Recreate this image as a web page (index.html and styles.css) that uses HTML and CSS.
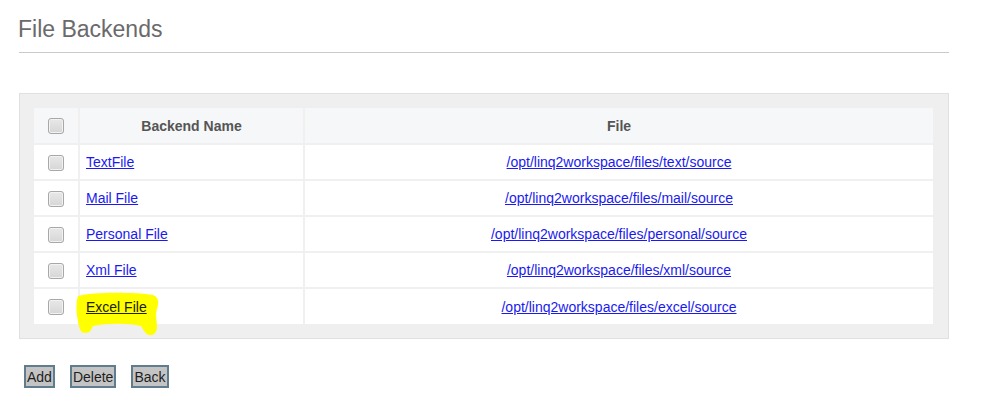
FILE: index.html
```html
<!DOCTYPE html>
<html>
<head>
<meta charset="utf-8">
<link rel="stylesheet" href="styles.css">
</head>
<body>
<div class="page">
  <h1 class="title">File Backends</h1>
  <div class="rule"></div>
  <div class="panel">
    <table class="grid">
      <thead>
        <tr>
          <th class="c-check"><span class="cb"></span></th>
          <th class="c-name">Backend Name</th>
          <th class="c-file">File</th>
        </tr>
      </thead>
      <tbody>
        <tr>
          <td class="c-check"><span class="cb"></span></td>
          <td class="c-name"><a href="#">TextFile</a></td>
          <td class="c-file"><a href="#">/opt/linq2workspace/files/text/source</a></td>
        </tr>
        <tr>
          <td class="c-check"><span class="cb"></span></td>
          <td class="c-name"><a href="#">Mail File</a></td>
          <td class="c-file"><a href="#">/opt/linq2workspace/files/mail/source</a></td>
        </tr>
        <tr>
          <td class="c-check"><span class="cb"></span></td>
          <td class="c-name"><a href="#">Personal File</a></td>
          <td class="c-file"><a href="#">/opt/linq2workspace/files/personal/source</a></td>
        </tr>
        <tr>
          <td class="c-check"><span class="cb"></span></td>
          <td class="c-name"><a href="#">Xml File</a></td>
          <td class="c-file"><a href="#">/opt/linq2workspace/files/xml/source</a></td>
        </tr>
        <tr>
          <td class="c-check"><span class="cb"></span></td>
          <td class="c-name">
            <span class="hl-wrap">
              <svg class="marker" width="92" height="46" viewBox="0 0 92 46">
                <path d="M5 5 C20 1, 60 1, 80 4 C86 6, 86 12, 84 18 C82 24, 84 30, 84 36 C84 42, 80 45, 76 44 C72 43, 70 38, 68 35 C55 32, 35 32, 20 35 C18 38, 18 42, 12 42 C7 42, 6 36, 5 30 C3 22, 3 10, 5 5 Z" fill="#ffff00"/>
              </svg>
              <a href="#" class="hl-link">Excel File</a>
            </span>
          </td>
          <td class="c-file"><a href="#">/opt/linq2workspace/files/excel/source</a></td>
        </tr>
      </tbody>
    </table>
  </div>
  <div class="actions">
    <button class="btn">Add</button>
    <button class="btn">Delete</button>
    <button class="btn">Back</button>
  </div>
</div>
</body>
</html>
```

FILE: styles.css
```css
html, body {
  margin: 0;
  padding: 0;
  background: #ffffff;
  font-family: "Liberation Sans", Arial, sans-serif;
}

.page {
  padding: 16px 0 0 19px;
  width: 930px;
}

.title {
  margin: 0 0 0 -1px;
  font-size: 23px;
  line-height: 26px;
  font-weight: normal;
  color: #6a6a6a;
}

.rule {
  margin-top: 10px;
  height: 1px;
  background: #cacaca;
}

.panel {
  margin-top: 40px;
  background: #efefef;
  border: 1px solid #e0e0e0;
  padding: 14px 15px 14px 14px;
}

.grid {
  width: 100%;
  border-collapse: collapse;
  table-layout: fixed;
  background: #ffffff;
}

.grid th, .grid td {
  height: 34px;
  padding: 0 6px;
  border: 2px solid #f0f0f0;
  font-size: 14px;
  vertical-align: middle;
}

.grid thead th { height: 35px; }
.grid tbody tr:last-child td { height: 35px; }

.grid tr:first-child th { border-top: none; }
.grid tr:last-child td { border-bottom: none; }
.grid th:first-child, .grid td:first-child { border-left: none; }
.grid th:last-child, .grid td:last-child { border-right: none; }

.grid thead th {
  background: #f6f7f9;
  color: #555555;
  font-weight: bold;
  text-align: center;
}

.c-check {
  width: 44px;
  text-align: center;
  padding: 0 !important;
}

.grid th.c-name { width: 211px; }

.c-name { text-align: left; }
.c-file { text-align: center; }

.grid a {
  color: #1a1aee;
  text-decoration: underline;
}

.cb {
  display: inline-block;
  width: 14px;
  height: 14px;
  border: 1px solid #a8a8a8;
  border-radius: 3px;
  background: linear-gradient(#e8e8e8, #d6d6d6);
  vertical-align: middle;
  box-shadow: inset 0 0 0 1px #f2f2f2;
}

.hl-wrap {
  position: relative;
  display: inline-block;
}

.marker {
  position: absolute;
  left: -13px;
  top: -8px;
  z-index: 0;
}

.hl-link {
  position: relative;
  z-index: 1;
  color: #222200 !important;
}

.actions {
  margin-top: 26px;
  margin-left: 5px;
  display: flex;
  gap: 15px;
}

.btn {
  margin: 0;
  height: 23px;
  padding: 0 1px;
  font-family: "Liberation Sans", Arial, sans-serif;
  font-size: 14px;
  color: #1e1e1e;
  background: #c4c4c4;
  border: 2px solid #5f7d8e;
  border-radius: 0;
}
```
